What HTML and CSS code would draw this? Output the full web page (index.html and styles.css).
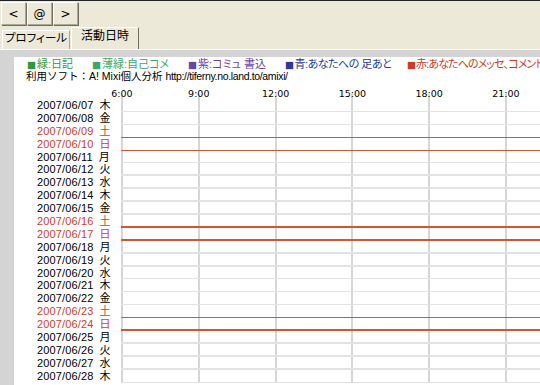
FILE: index.html
```html
<!DOCTYPE html>
<html lang="ja">
<head>
<meta charset="utf-8">
<link rel="stylesheet" href="styles.css">
</head>
<body>
<div class="toolbar">
  <button class="nav">&lt;</button>
  <button class="nav">@</button>
  <button class="nav">&gt;</button>
</div>
<div class="tabs">
  <div class="tab">プロフィール</div>
  <div class="tab active">活動日時</div>
</div>
<div class="pane">
  <div class="sheet">
    <div class="legend">
      <span class="lg green"><span class="sq">■</span>緑:日記</span>
      <span class="lg lgreen"><span class="sq">■</span>薄緑:自己コメ</span>
      <span class="lg purple"><span class="sq">■</span>紫:コミュ 書込</span>
      <span class="lg blue"><span class="sq">■</span>青:あなたへの 足あと</span>
      <span class="lg red"><span class="sq">■</span>赤:あなたへのメッセ、コメント</span>
    </div>
    <div class="credit">利用ソフト：A! Mixi個人分析 <span class="url">http://tiferny.no.land.to/amixi/</span></div>
    <div class="axis">
      <span>6:00</span><span>9:00</span><span>12:00</span><span>15:00</span><span>18:00</span><span>21:00</span>
    </div>
    <div class="chart">
      <div class="row"><div class="lbl">2007/06/07<span class="dw">木</span></div><div class="cells"></div></div>
      <div class="row"><div class="lbl">2007/06/08<span class="dw">金</span></div><div class="cells"></div></div>
      <div class="row we"><div class="lbl">2007/06/09<span class="dw">土</span></div><div class="cells"></div></div>
      <div class="row we"><div class="lbl">2007/06/10<span class="dw">日</span></div><div class="cells"></div></div>
      <div class="row"><div class="lbl">2007/06/11<span class="dw">月</span></div><div class="cells"></div></div>
      <div class="row"><div class="lbl">2007/06/12<span class="dw">火</span></div><div class="cells"></div></div>
      <div class="row"><div class="lbl">2007/06/13<span class="dw">水</span></div><div class="cells"></div></div>
      <div class="row"><div class="lbl">2007/06/14<span class="dw">木</span></div><div class="cells"></div></div>
      <div class="row"><div class="lbl">2007/06/15<span class="dw">金</span></div><div class="cells"></div></div>
      <div class="row we"><div class="lbl">2007/06/16<span class="dw">土</span></div><div class="cells"></div></div>
      <div class="row we"><div class="lbl">2007/06/17<span class="dw">日</span></div><div class="cells"></div></div>
      <div class="row"><div class="lbl">2007/06/18<span class="dw">月</span></div><div class="cells"></div></div>
      <div class="row"><div class="lbl">2007/06/19<span class="dw">火</span></div><div class="cells"></div></div>
      <div class="row"><div class="lbl">2007/06/20<span class="dw">水</span></div><div class="cells"></div></div>
      <div class="row"><div class="lbl">2007/06/21<span class="dw">木</span></div><div class="cells"></div></div>
      <div class="row"><div class="lbl">2007/06/22<span class="dw">金</span></div><div class="cells"></div></div>
      <div class="row we"><div class="lbl">2007/06/23<span class="dw">土</span></div><div class="cells"></div></div>
      <div class="row we"><div class="lbl">2007/06/24<span class="dw">日</span></div><div class="cells"></div></div>
      <div class="row"><div class="lbl">2007/06/25<span class="dw">月</span></div><div class="cells"></div></div>
      <div class="row"><div class="lbl">2007/06/26<span class="dw">火</span></div><div class="cells"></div></div>
      <div class="row"><div class="lbl">2007/06/27<span class="dw">水</span></div><div class="cells"></div></div>
      <div class="row"><div class="lbl">2007/06/28<span class="dw">木</span></div><div class="cells"></div></div>
    </div>
  </div>
</div>
</body>
</html>
```

FILE: styles.css
```css
html, body {
  margin: 0;
  padding: 0;
  width: 540px;
  height: 385px;
  overflow: hidden;
}
body {
  background: #ece9d8;
  font-family: "Liberation Sans", "Noto Sans CJK JP", sans-serif;
  font-feature-settings: "palt";
  font-size: 11px;
  color: #000;
  border-top: 1px solid #222;
  box-sizing: border-box;
  display: flex;
  flex-direction: column;
}
.toolbar {
  display: flex;
  gap: 1px;
  padding: 1px 0 0 1px;
  height: 24px;
  box-sizing: border-box;
}
.nav {
  width: 25px;
  height: 23px;
  margin: 0;
  padding: 0;
  background: #ece9d8;
  border: 1px solid;
  border-color: #fff #aca899 #aca899 #fff;
  box-shadow: 1px 1px 0 #716f64;
  font-family: "DejaVu Sans", sans-serif;
  font-size: 12px;
  color: #000;
  line-height: 20px;
}
.tabs {
  display: flex;
  align-items: flex-end;
  height: 24px;
  padding-left: 2px;
  box-sizing: border-box;
}
.tab {
  height: 18px;
  width: 66px;
  border: 1px solid;
  border-color: #fff #aca899 transparent #fff;
  border-bottom: none;
  font-size: 11.5px;
  line-height: 15px;
  text-align: center;
  white-space: nowrap;
}
.tab.active {
  height: 21px;
  line-height: 17px;
  font-size: 12px;
  border-right-color: #716f64;
  margin-left: 1px;
}
.pane {
  flex: 1;
  background: #d4d4d4;
  border-top: 1px solid #fcfaf0;
  padding: 7px 0 0 14px;
  overflow: hidden;
}
.sheet {
  background: #fff;
  height: 100%;
  padding-top: 1px;
  overflow: hidden;
  white-space: nowrap;
}
.legend {
  display: flex;
  padding-left: 13px;
  height: 12px;
  line-height: 12px;
  font-size: 11px;
}
.sq {
  font-family: "DejaVu Sans", sans-serif;
  font-size: 9.5px;
  margin-right: 1px;
}
.lg { flex: none; }
.lg.green { color: #2f9a3c; width: 65px; }
.lg.lgreen { color: #3aa86a; width: 96px; }
.lg.purple { color: #6a44a8; width: 97px; }
.lg.blue { color: #2c3a96; width: 122px; letter-spacing: -0.5px; }
.lg.red { color: #cf3a20; letter-spacing: -0.9px; }
.credit {
  padding-left: 12px;
  height: 12px;
  line-height: 12px;
  font-size: 10.5px;
  font-feature-settings: normal;
}
.url {
  letter-spacing: -0.35px;
}
.axis {
  display: flex;
  margin-left: 69.6px;
  height: 17px;
  align-items: flex-end;
  font-family: "DejaVu Sans", sans-serif;
  font-size: 9.5px;
  line-height: 11px;
  position: relative;
  z-index: 1;
}
.axis span {
  flex: none;
  width: 76.8px;
  text-align: center;
}
.chart {
  margin-top: -5px;
  padding-top: 5px;
  background:
    repeating-linear-gradient(to right, #d6d6d6 0 2px, transparent 2px 76.8px) 107px 0 / calc(100% - 107px) 100% no-repeat;
}
.row {
  display: flex;
  height: 12.9px;
}
.lbl {
  width: 107px;
  flex: none;
  box-sizing: border-box;
  padding-left: 23px;
  line-height: 12.9px;
  font-size: 11px;
  letter-spacing: 0.15px;
  background: #fff;
}
.dw {
  margin-left: 6px;
  letter-spacing: 0;
}
.cells {
  flex: 1;
  background: linear-gradient(to top, #e2e2e2 0 1.5px, transparent 1.5px);
}
.row.we .lbl { color: #d0401f; }
.row.we .cells {
  background: linear-gradient(to top, #d9532f 0 1.5px, transparent 1.5px);
}
```
